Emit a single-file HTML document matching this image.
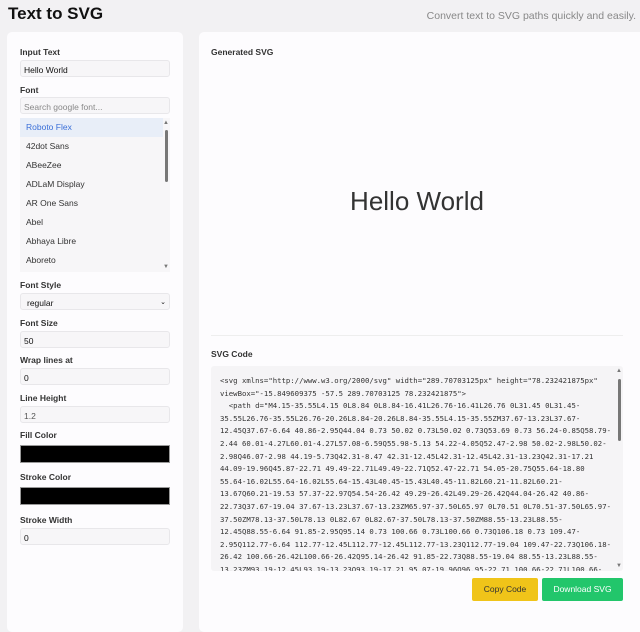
<!DOCTYPE html>
<html><head><style>
*{box-sizing:border-box;margin:0;padding:0}
body{width:640px;height:625px;overflow:hidden;background:#f2f1f3;font-family:"Liberation Sans",sans-serif;color:#222;position:relative}
h1{position:absolute;left:8px;top:4px;font-size:17px;font-weight:bold;color:#111}
.sub{position:absolute;right:4px;top:10px;font-size:10.5px;color:#888}
.panel{position:absolute;background:#fdfcfe;border-radius:5px}
.lbl{position:absolute;left:13px;font-size:8.5px;font-weight:bold;color:#333}
.inp{position:absolute;left:13px;width:150px;height:17px;background:#f7f6f8;border:1px solid #e8e7ea;border-radius:3px;font-size:8.5px;padding:4px 3px;color:#111}
.sw{position:absolute;left:13px;width:150px;height:18px;background:#000;border:1px solid #999}
.list{position:absolute;left:13px;top:86px;width:150px;height:154px;background:#f7f6f8}
.list div{height:19px;line-height:19px;font-size:8.5px;padding-left:6px;color:#333;width:143px}
pre{font-family:"DejaVu Sans Mono","Liberation Mono",monospace;font-size:7.3px;line-height:12.6px;color:#333;white-space:pre}
.btn{position:absolute;top:546px;height:23px;border-radius:2px;font-size:8.5px;text-align:center;line-height:23px}
</style></head><body>
<h1>Text to SVG</h1>
<div class="sub">Convert text to SVG paths quickly and easily.</div>
<div class="panel" style="left:7px;top:32px;width:176px;height:600px">
<div class="lbl" style="top:15px">Input Text</div>
<div class="inp" style="top:28px">Hello World</div>
<div class="lbl" style="top:53px">Font</div>
<div class="inp" style="top:65px;color:#888">Search google font...</div>
<div class="list">
<div style="background:#e8eef8;color:#3a6fd8">Roboto Flex</div>
<div>42dot Sans</div><div>ABeeZee</div><div>ADLaM Display</div><div>AR One Sans</div><div>Abel</div><div>Abhaya Libre</div><div>Aboreto</div>
<span style="position:absolute;right:2px;top:12px;width:3px;height:52px;background:#777;border-radius:2px"></span>
<span style="position:absolute;right:1px;top:2px;font-size:6px;color:#777">▲</span>
<span style="position:absolute;right:1px;bottom:2px;font-size:6px;color:#777">▼</span>
</div>
<div class="lbl" style="top:248px">Font Style</div>
<div class="inp" style="top:261px;padding-left:6px">regular<span style="float:right;font-size:7px">⌄</span></div>
<div class="lbl" style="top:286px">Font Size</div>
<div class="inp" style="top:299px">50</div>
<div class="lbl" style="top:323px">Wrap lines at</div>
<div class="inp" style="top:336px">0</div>
<div class="lbl" style="top:361px">Line Height</div>
<div class="inp" style="top:374px;color:#555">1.2</div>
<div class="lbl" style="top:398px">Fill Color</div>
<div class="sw" style="top:413px"></div>
<div class="lbl" style="top:440px">Stroke Color</div>
<div class="sw" style="top:455px"></div>
<div class="lbl" style="top:483px">Stroke Width</div>
<div class="inp" style="top:496px">0</div>
</div>
<div class="panel" style="left:199px;top:32px;width:450px;height:600px">
<div class="lbl" style="left:12px;top:15px">Generated SVG</div>
<div style="position:absolute;left:0;width:436px;top:154px;text-align:center;font-size:26px;color:#333">Hello World</div>
<div style="position:absolute;left:12px;width:412px;top:303px;border-top:1px solid #eee"></div>
<div class="lbl" style="left:12px;top:317px">SVG Code</div>
<div style="position:absolute;left:12px;top:334px;width:412px;height:205px;background:#f5f4f6;border-radius:3px;overflow:hidden;padding:9px 0 0 9px">
<pre>&lt;svg xmlns="http://www.w3.org/2000/svg" width="289.70703125px" height="78.232421875px"
viewBox="-15.849609375 -57.5 289.70703125 78.232421875"&gt;
  &lt;path d="M4.15-35.55L4.15 0L8.84 0L8.84-16.41L26.76-16.41L26.76 0L31.45 0L31.45-
35.55L26.76-35.55L26.76-20.26L8.84-20.26L8.84-35.55L4.15-35.55ZM37.67-13.23L37.67-
12.45Q37.67-6.64 40.86-2.95Q44.04 0.73 50.02 0.73L50.02 0.73Q53.69 0.73 56.24-0.85Q58.79-
2.44 60.01-4.27L60.01-4.27L57.08-6.59Q55.98-5.13 54.22-4.05Q52.47-2.98 50.02-2.98L50.02-
2.98Q46.07-2.98 44.19-5.73Q42.31-8.47 42.31-12.45L42.31-12.45L42.31-13.23Q42.31-17.21
44.09-19.96Q45.87-22.71 49.49-22.71L49.49-22.71Q52.47-22.71 54.05-20.75Q55.64-18.80
55.64-16.02L55.64-16.02L55.64-15.43L40.45-15.43L40.45-11.82L60.21-11.82L60.21-
13.67Q60.21-19.53 57.37-22.97Q54.54-26.42 49.29-26.42L49.29-26.42Q44.04-26.42 40.86-
22.73Q37.67-19.04 37.67-13.23L37.67-13.23ZM65.97-37.50L65.97 0L70.51 0L70.51-37.50L65.97-
37.50ZM78.13-37.50L78.13 0L82.67 0L82.67-37.50L78.13-37.50ZM88.55-13.23L88.55-
12.45Q88.55-6.64 91.85-2.95Q95.14 0.73 100.66 0.73L100.66 0.73Q106.18 0.73 109.47-
2.95Q112.77-6.64 112.77-12.45L112.77-12.45L112.77-13.23Q112.77-19.04 109.47-22.73Q106.18-
26.42 100.66-26.42L100.66-26.42Q95.14-26.42 91.85-22.73Q88.55-19.04 88.55-13.23L88.55-
13.23ZM93.19-12.45L93.19-13.23Q93.19-17.21 95.07-19.96Q96.95-22.71 100.66-22.71L100.66-</pre>
<span style="position:absolute;right:2px;top:13px;width:3px;height:62px;background:#777;border-radius:2px"></span>
<span style="position:absolute;right:1px;top:2px;font-size:6px;color:#777">▲</span>
<span style="position:absolute;right:1px;bottom:2px;font-size:6px;color:#777">▼</span>
</div>
<div class="btn" style="left:273px;width:66px;background:#f0c419;color:#333">Copy Code</div>
<div class="btn" style="left:343px;width:81px;background:#22c66b;color:#fff">Download SVG</div>
</div>
</body></html>
